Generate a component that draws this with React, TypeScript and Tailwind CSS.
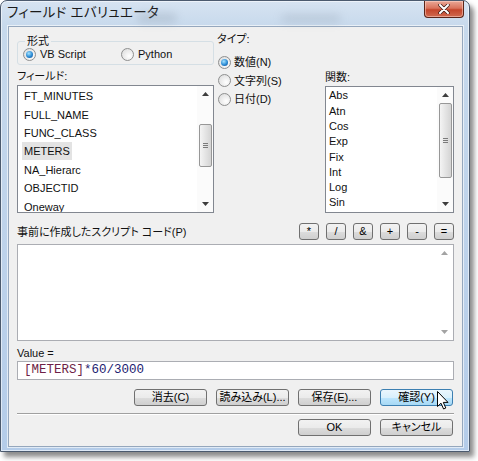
import React from "react";

const fieldItems = ["FT_MINUTES", "FULL_NAME", "FUNC_CLASS", "METERS", "NA_Hierarc", "OBJECTID", "Oneway"];
const funcItems = ["Abs", "Atn", "Cos", "Exp", "Fix", "Int", "Log", "Sin"];
const ops = ["*", "/", "&", "+", "-", "="];

function Radio({ checked }: { checked?: boolean }) {
  return (
    <span className="flex h-[13px] w-[13px] shrink-0 items-center justify-center rounded-full border border-[#8e8f8f] bg-[radial-gradient(circle_at_65%_65%,#ffffff_0%,#d8d8d8_100%)]">
      {checked && (
        <span className="h-[7px] w-[7px] rounded-full bg-[radial-gradient(circle_at_40%_35%,#a6e4ff_0%,#2a8ad4_55%,#0d4486_100%)]" />
      )}
    </span>
  );
}

function Arrow({ dir, disabled }: { dir: "up" | "down"; disabled?: boolean }) {
  return (
    <svg width="7" height="4" viewBox="0 0 7 4">
      <path d={dir === "up" ? "M3.5 0L7 4H0Z" : "M0 0H7L3.5 4Z"} fill={disabled ? "#a3a3a3" : "#3d3d3d"} />
    </svg>
  );
}

function Thumb({ mt, h }: { mt: number; h: number }) {
  return (
    <div className="flex justify-center" style={{ marginTop: mt }}>
      <div
        className="flex w-[13px] flex-col items-center justify-center gap-[1px] rounded-[2px] border border-[#979797] bg-[linear-gradient(90deg,#f4f4f4,#e4e4e4_50%,#d4d4d4)]"
        style={{ height: h }}
      >
        <span className="h-px w-[5px] bg-[#7a7a7a]" />
        <span className="h-px w-[5px] bg-[#7a7a7a]" />
        <span className="h-px w-[5px] bg-[#7a7a7a]" />
      </div>
    </div>
  );
}

function Scrollbar({ thumbTop, thumbH }: { thumbTop: number; thumbH: number }) {
  return (
    <div className="flex w-[16px] flex-col bg-[#fbfbfb]">
      <div className="flex h-[16px] items-center justify-center">
        <Arrow dir="up" />
      </div>
      <div className="flex-1">
        <Thumb mt={thumbTop} h={thumbH} />
      </div>
      <div className="flex h-[16px] items-center justify-center">
        <Arrow dir="down" />
      </div>
    </div>
  );
}

function Btn({ label, hot, w = "w-[73px]" }: { label: string; hot?: boolean; w?: string }) {
  return (
    <div
      className={
        w +
        " flex h-[17px] items-center justify-center rounded-[3px] border text-[11px] leading-none text-black " +
        (hot
          ? "border-[#3c7fb1] bg-[linear-gradient(#eaf6fd_0%,#d9f0fc_50%,#bee6fd_50%,#a7d9f5_100%)]"
          : "border-[#707070] bg-[linear-gradient(#f2f2f2_0%,#ebebeb_50%,#dddddd_50%,#cfcfcf_100%)]")
      }
    >
      {label}
    </div>
  );
}

export default function App() {
  return (
    <div className="relative h-[461px] w-[478px] overflow-hidden bg-white font-['Liberation_Sans','Noto_Sans_CJK_JP',sans-serif] [font-feature-settings:'palt'] text-[11px] text-[#111]">
      {/* window frame */}
      <div className="relative flex h-[452px] w-[470px] flex-col rounded-t-[7px] border border-[#4b5a6e] bg-[linear-gradient(180deg,#d6e3f1_0%,#c7d9ec_26px,#b4cce9_100%)] pb-[4px] pl-[7px] pr-[6px] pt-[25px] shadow-[inset_0_0_0_1px_rgba(255,255,255,0.55),4px_5px_5px_rgba(0,0,0,0.45)]">
        {/* title */}
        <div className="absolute left-[6px] top-[5px] text-[13.5px] leading-[14px] tracking-[0.3px] text-[#1a1a1a]">
          フィールド エバリュエータ
        </div>
        <div className="absolute left-[136px] top-[12px] h-[10px] w-[40px] rounded-full bg-[#8a98a8] opacity-30 blur-[4px]" />
        <div className="absolute left-[280px] top-[13px] h-[9px] w-[60px] rounded-full bg-[#8a98a8] opacity-25 blur-[4px]" />
        {/* close button */}
        <div className="absolute right-[5px] top-0 flex h-[17px] w-[40px] items-center justify-center rounded-b-[4px] border border-t-0 border-[#5a2418] bg-[linear-gradient(#eaa897_0%,#d9735c_45%,#c4452b_55%,#d06a4f_100%)] shadow-[inset_0_0_0_1px_rgba(255,220,210,0.5)]">
          <svg width="12" height="10" viewBox="0 0 12 10">
            <path d="M2 1L10 9M10 1L2 9" stroke="#3a1a14" strokeWidth="3.4" strokeLinecap="round" />
            <path d="M2 1L10 9M10 1L2 9" stroke="#ffffff" strokeWidth="2" strokeLinecap="round" />
          </svg>
        </div>

        {/* client area */}
        <div className="flex h-[421px] flex-col border border-[#95a7bd] bg-[#f0f0f0] px-[8px] shadow-[0_0_0_1px_rgba(255,255,255,0.6)]">
          {/* top section */}
          <div className="flex h-[186px] items-start">
            {/* left column */}
            <div className="flex w-[197px] flex-col">
              <fieldset className="mt-[8px] rounded-[3px] border border-[#d5dfe5] pb-[3px] pl-[5px]">
                <legend className="ml-[2px] px-[2px] leading-[12px]">形式</legend>
                <div className="flex h-[14px] items-center">
                  <div className="flex w-[98px] items-center gap-[4px]">
                    <Radio checked />
                    <span>VB Script</span>
                  </div>
                  <div className="flex items-center gap-[4px]">
                    <Radio />
                    <span>Python</span>
                  </div>
                </div>
              </fieldset>
              <div className="mt-[5px] leading-[12px]">フィールド:</div>
              <div className="mt-[3px] flex h-[128px] border border-[#828790] bg-white">
                <div className="flex-1 overflow-hidden pl-[4px] pt-[1px]">
                  {fieldItems.map((f) => (
                    <div key={f} className="flex h-[18.4px] items-center">
                      <span className={"px-[2px] leading-[18px] " + (f === "METERS" ? "bg-[#e3e3e3]" : "")}>{f}</span>
                    </div>
                  ))}
                </div>
                <Scrollbar thumbTop={22} thumbH={43} />
              </div>
            </div>

            {/* middle column */}
            <div className="ml-[3px] flex flex-1 flex-col">
              <div className="mt-[6px] leading-[12px]">タイプ:</div>
              <div className="mt-[8px] flex flex-col">
                {["数値(N)", "文字列(S)", "日付(D)"].map((t, i) => (
                  <div key={t} className="flex h-[18.5px] items-center gap-[3px] pl-[1px]">
                    <Radio checked={i === 0} />
                    <span>{t}</span>
                  </div>
                ))}
              </div>
            </div>

            {/* right column */}
            <div className="flex w-[129px] flex-col">
              <div className="mt-[44px] leading-[12px]">関数:</div>
              <div className="mt-[3px] flex h-[127px] border border-[#828790] bg-white">
                <div className="flex-1 overflow-hidden pl-[3px] pt-[1px]">
                  {funcItems.map((f) => (
                    <div key={f} className="flex h-[15.3px] items-center">
                      {f}
                    </div>
                  ))}
                </div>
                <Scrollbar thumbTop={0} thumbH={75} />
              </div>
            </div>
          </div>

          {/* pre-logic script */}
          <div className="mt-[10px] flex h-[17px] items-center justify-between">
            <span className="pt-[2px]">事前に作成したスクリプト コード(P)</span>
            <div className="flex gap-[7px]">
              {ops.map((o) => (
                <Btn key={o} label={o} w="w-[20px]" />
              ))}
            </div>
          </div>
          <div className="mt-[4px] flex h-[97px] border border-[#abadb3] bg-white">
            <div className="flex-1" />
            <div className="flex w-[17px] flex-col justify-between py-[6px]">
              <div className="flex justify-center">
                <Arrow dir="up" disabled />
              </div>
              <div className="flex justify-center">
                <Arrow dir="down" disabled />
              </div>
            </div>
          </div>

          <div className="mt-[6px] leading-[12px]">Value =</div>
          <div className="mt-[2px] flex h-[19px] items-center border border-[#abadb3] bg-white pl-[6px] font-['Liberation_Mono',monospace] text-[12.5px] [font-feature-settings:normal]">
            <span className="text-[#6e1f47]">[METERS]</span>
            <span className="text-[#1c2170]">*60/3000</span>
          </div>

          <div className="mt-[9px] flex justify-end gap-[9px] pr-[1px]">
            <Btn label="消去(C)" />
            <Btn label="読み込み(L)..." />
            <Btn label="保存(E)..." />
            <Btn label="確認(Y)" hot />
          </div>

          <div className="mt-[7px] h-[2px] border-t border-[#a0a0a0] border-b-white" style={{ borderBottomWidth: 1 }} />

          <div className="mt-[4px] flex justify-end gap-[9px] pr-[1px]">
            <Btn label="OK" />
            <Btn label="キャンセル" />
          </div>
        </div>
      </div>

      {/* mouse pointer */}
      <svg className="absolute left-[437px] top-[391px]" width="12" height="19" viewBox="0 0 12 19">
        <path d="M0.5 0.5V15.5L4 12.2L6.6 18L8.8 17L6.3 11.4H11Z" fill="#ffffff" stroke="#000000" strokeWidth="1" strokeLinejoin="round" />
      </svg>
    </div>
  );
}
